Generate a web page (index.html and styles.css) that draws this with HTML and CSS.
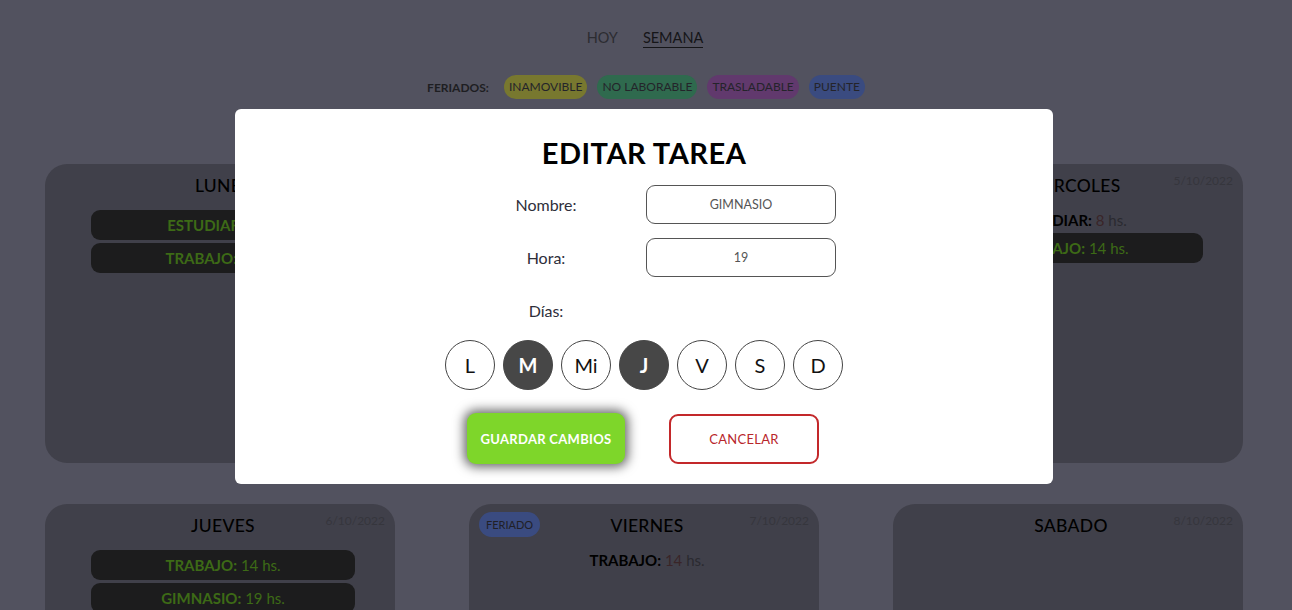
FILE: index.html
```html
<!DOCTYPE html>
<html lang="es">
<head>
<meta charset="utf-8">
<title>Semana</title>
<link rel="stylesheet" href="styles.css">
</head>
<body>
<div class="app">
  <nav class="nav">
    <a class="nav-link">HOY</a>
    <a class="nav-link active">SEMANA</a>
  </nav>
  <div class="legend">
    <span class="legend-title">FERIADOS:</span>
    <span class="tag tag-yellow">INAMOVIBLE</span>
    <span class="tag tag-green">NO LABORABLE</span>
    <span class="tag tag-purple">TRASLADABLE</span>
    <span class="tag tag-blue">PUENTE</span>
  </div>
  <div class="week">
    <div class="card">
      <span class="date">3/10/2022</span>
      <h2 class="day">LUNES</h2>
      <div class="task hl"><b>ESTUDIAR:</b> 8 hs.</div>
      <div class="task hl"><b>TRABAJO:</b> 14 hs.</div>
    </div>
    <div class="card">
      <span class="date">4/10/2022</span>
      <h2 class="day">MARTES</h2>
      <div class="task hl"><b>GIMNASIO:</b> 19 hs.</div>
    </div>
    <div class="card">
      <span class="date">5/10/2022</span>
      <h2 class="day">MIERCOLES</h2>
      <div class="task"><b>ESTUDIAR:</b> <span class="num">8</span> hs.</div>
      <div class="task hl"><b>TRABAJO:</b> 14 hs.</div>
    </div>
    <div class="card">
      <span class="date">6/10/2022</span>
      <h2 class="day">JUEVES</h2>
      <div class="task hl"><b>TRABAJO:</b> 14 hs.</div>
      <div class="task hl"><b>GIMNASIO:</b> 19 hs.</div>
    </div>
    <div class="card">
      <span class="badge">FERIADO</span>
      <span class="date">7/10/2022</span>
      <h2 class="day">VIERNES</h2>
      <div class="task"><b>TRABAJO:</b> <span class="num">14</span> hs.</div>
    </div>
    <div class="card">
      <span class="date">8/10/2022</span>
      <h2 class="day">SABADO</h2>
    </div>
  </div>
</div>

<div class="overlay">
  <div class="modal">
    <h1 class="modal-title">EDITAR TAREA</h1>
    <div class="form">
      <label class="label">Nombre:</label>
      <div class="input">GIMNASIO</div>
      <label class="label">Hora:</label>
      <div class="input">19</div>
      <label class="label">Días:</label>
      <div></div>
    </div>
    <div class="days">
      <span class="circle">L</span>
      <span class="circle on">M</span>
      <span class="circle">Mi</span>
      <span class="circle on">J</span>
      <span class="circle">V</span>
      <span class="circle">S</span>
      <span class="circle">D</span>
    </div>
    <div class="actions">
      <button class="btn btn-save">GUARDAR CAMBIOS</button>
      <button class="btn btn-cancel">CANCELAR</button>
    </div>
  </div>
</div>
</body>
</html>
```

FILE: styles.css
```css
* { box-sizing: border-box; }
html, body { margin: 0; }
body {
  background: #52525f;
  font-family: "Lato", "Open Sans", sans-serif;
  color: #000;
  height: 610px;
  overflow: hidden;
}
.app { padding-top: 28px; }
.nav {
  display: flex;
  justify-content: center;
  gap: 25px;
  padding-right: 2px;
}
.nav-link {
  font-size: 14.5px;
  line-height: 19px;
  color: #2c2c31;
}
.nav-link.active {
  color: #151518;
  border-bottom: 1px solid #151518;
}
.legend {
  margin-top: 27px;
  display: flex;
  justify-content: center;
  align-items: center;
  gap: 10px;
}
.legend-title {
  font-size: 12px;
  font-weight: 700;
  color: #1e1e22;
  margin-right: 5px;
}
.tag {
  font-size: 12px;
  line-height: 24px;
  height: 24px;
  padding: 0 5px;
  border-radius: 12px;
  color: #24242a;
}
.tag-yellow { background: #78782f; }
.tag-green { background: #2f6a4e; }
.tag-purple { background: #61396d; }
.tag-blue { background: #3a4b80; }

.week {
  margin-top: 65px;
  padding-left: 45px;
  display: grid;
  grid-template-columns: repeat(3, 350px);
  column-gap: 74px;
  row-gap: 41px;
}
.card {
  position: relative;
  height: 299px;
  background: #40404a;
  border-radius: 22px;
  padding: 12px 40px 0 46px;
  display: flex;
  flex-direction: column;
  align-items: center;
  gap: 3px;
}
.day {
  margin: 0 0 11px;
  font-size: 17.5px;
  line-height: 20px;
  font-weight: 500;
  color: #000;
  letter-spacing: 0.3px;
}
.date {
  position: absolute;
  top: 9px;
  right: 10px;
  font-size: 12px;
  color: #36363d;
}
.badge {
  position: absolute;
  top: 8px;
  left: 10px;
  height: 25px;
  line-height: 25px;
  padding: 0 7px;
  border-radius: 13px;
  background: #3a4b80;
  font-size: 11px;
  color: #202026;
}
.task {
  width: 264px;
  text-align: center;
  font-size: 15px;
  line-height: 20px;
  color: #2a2a30;
}
.task b { color: #000; }
.task .num { color: #3a2528; }
.task.hl {
  background: #1c1c1d;
  border-radius: 9px;
  padding: 5px 0;
  color: #3d6a16;
}
.task.hl b { color: #3d6a16; }

.overlay {
  position: fixed;
  inset: 0;
  display: flex;
  justify-content: center;
  align-items: flex-start;
}
.modal {
  margin-top: 109px;
  margin-left: -4px;
  width: 818px;
  height: 375px;
  background: #fff;
  border-radius: 6px;
  padding: 27px 0 20px;
  display: flex;
  flex-direction: column;
  align-items: center;
}
.modal-title {
  margin: 0;
  font-size: 29px;
  line-height: 34px;
  font-weight: 700;
  letter-spacing: 0.5px;
}
.form {
  margin-top: 15px;
  display: grid;
  grid-template-columns: 194px 194px;
  grid-auto-rows: 39px;
  row-gap: 14px;
  align-items: center;
  justify-items: center;
  margin-left: -2px;
}
.label {
  font-size: 16px;
  color: #2e2e3a;
}
.input {
  width: 190px;
  height: 39px;
  border: 1px solid #555;
  border-radius: 9px;
  display: flex;
  align-items: center;
  justify-content: center;
  font-size: 12.5px;
  color: #555;
  justify-self: end;
  margin-right: 1px;
}
.days {
  margin-top: 10px;
  display: flex;
  gap: 8px;
}
.circle {
  width: 50px;
  height: 50px;
  border-radius: 50%;
  border: 1px solid #444;
  display: flex;
  align-items: center;
  justify-content: center;
  font-size: 20px;
  color: #111;
}
.circle.on {
  background: #474747;
  border-color: #474747;
  color: #fff;
  font-weight: 700;
}
.actions {
  margin-top: 24px;
  display: flex;
  align-items: center;
  gap: 44px;
  margin-left: -2px;
}
.btn {
  font-family: inherit;
  font-size: 13px;
  border-radius: 9px;
  cursor: pointer;
  letter-spacing: 0.3px;
}
.btn-save {
  width: 158px;
  height: 51px;
  border: none;
  background: #7ed62a;
  color: #fff;
  font-weight: 700;
  box-shadow: 0 0 11px 3px #666;
  margin-top: -1px;
}
.btn-cancel {
  width: 150px;
  height: 50px;
  background: #fff;
  border: 2px solid #c3282a;
  color: #b8262b;
}
```
